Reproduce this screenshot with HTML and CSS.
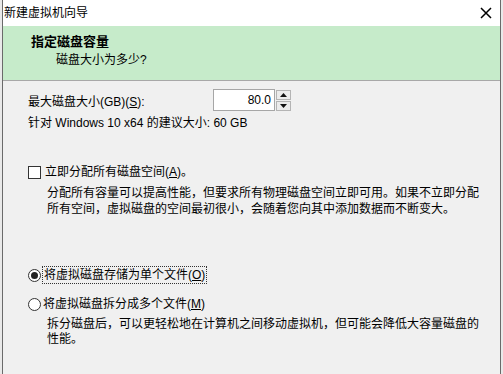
FILE: index.html
```html
<!DOCTYPE html>
<html lang="zh-CN">
<head>
<meta charset="utf-8">
<title>新建虚拟机向导</title>
<link rel="stylesheet" href="styles.css">
</head>
<body>
<div class="window">
  <div class="titlebar">
    <span class="title">新建虚拟机向导</span>
    <span class="close"><svg class="close-icon" width="12" height="12" viewBox="0 0 12 12"><path d="M1 1 L11 11 M11 1 L1 11" stroke="#000" stroke-width="1.5" fill="none"/></svg></span>
  </div>
  <div class="header">
    <div class="h-title">指定磁盘容量</div>
    <div class="h-sub">磁盘大小为多少?</div>
  </div>
  <div class="content">
    <div class="row-size">
      <span class="label">最大磁盘大小(GB)(<u>S</u>):</span>
      <div class="spin">
        <div class="spin-input">80.0</div>
        <div class="spin-btns">
          <div class="spin-btn"><svg width="7" height="4" viewBox="0 0 7 4"><path d="M3.5 0 L7 4 L0 4 Z" fill="#111"/></svg></div>
          <div class="spin-btn"><svg width="7" height="4" viewBox="0 0 7 4"><path d="M0 0 L7 0 L3.5 4 Z" fill="#111"/></svg></div>
        </div>
      </div>
    </div>
    <div class="hint">针对 Windows 10 x64 的建议大小: 60 GB</div>

    <div class="option check-opt">
      <span class="checkbox"></span>
      <span class="opt-label">立即分配所有磁盘空间(<u>A</u>)。</span>
    </div>
    <p class="desc desc-a">分配所有容量可以提高性能，但要求所有物理磁盘空间立即可用。如果不立即分配所有空间，虚拟磁盘的空间最初很小，会随着您向其中添加数据而不断变大。</p>

    <div class="option radio-opt1">
      <span class="radio checked"></span>
      <span class="opt-label focus">将虚拟磁盘存储为单个文件(<u>O</u>)</span>
    </div>
    <div class="option radio-opt2">
      <span class="radio"></span>
      <span class="opt-label">将虚拟磁盘拆分成多个文件(<u>M</u>)</span>
    </div>
    <p class="desc desc-b">拆分磁盘后，可以更轻松地在计算机之间移动虚拟机，但可能会降低大容量磁盘的性能。</p>
  </div>
</div>
</body>
</html>
```
FILE: styles.css
```css
html {
  margin: 0;
  padding: 0;
  overflow: hidden;
}
body {
  margin: 0;
  padding: 0;
  width: 503px;
  height: 374px;
  overflow: hidden;
  background: #e9e9e9;
  font-family: "Liberation Sans", "Noto Sans CJK SC", sans-serif;
  font-size: 12px;
  color: #000;
}
.window {
  margin-left: 2px;
  width: 497px;
  height: 374px;
  border-left: 1px solid #6a6a6a;
  border-right: 1px solid #6a6a6a;
  background: #f0f0f0;
  display: flex;
  flex-direction: column;
}
.titlebar {
  height: 26px;
  background: #fff;
  display: grid;
  grid-template-columns: 1fr 12px;
  align-items: center;
  padding: 0 8px 0 1px;
}
.title {
  font-size: 12px;
  line-height: 16px;
}
.close {
  width: 12px;
  height: 12px;
  display: block;
}
.close-icon {
  display: block;
}
.header {
  background: #c6ebca;
  border-bottom: 1px solid #a8a8a8;
  padding-left: 28px;
  box-sizing: border-box;
  height: 55px;
}
.h-title {
  font-weight: bold;
  font-size: 13px;
  line-height: 16px;
  margin-top: 8px;
}
.h-sub {
  font-size: 12px;
  line-height: 16px;
  margin-top: 2px;
  padding-left: 25px;
}
.content {
  padding-left: 25px;
}
.row-size {
  display: flex;
  align-items: center;
  margin-top: 8px;
  height: 22px;
}
.label {
  width: 185px;
}
.spin {
  display: flex;
  height: 22px;
}
.spin-input {
  width: 57px;
  height: 20px;
  border: 1px solid #a6a6a6;
  background: #fff;
  text-align: right;
  line-height: 20px;
  padding-right: 3px;
  font-size: 12px;
}
.spin-btns {
  display: flex;
  flex-direction: column;
  margin-left: 1px;
  width: 15px;
  gap: 1px;
  padding-top: 1px;
}
.spin-btn {
  flex: 1;
  border: 1px solid #b4b4b4;
  background: #ececec;
  display: flex;
  align-items: center;
  justify-content: center;
}
.spin-btn svg {
  display: block;
}
.hint {
  margin-top: 4px;
  line-height: 16px;
}
.option {
  display: flex;
  align-items: center;
  height: 18px;
}
.check-opt {
  margin-top: 32px;
}
.checkbox {
  width: 11px;
  height: 11px;
  border: 1px solid #333;
  background: #fff;
  margin-right: 4px;
  flex: none;
}
.opt-label {
  line-height: 16px;
}
.desc {
  margin: 0;
  padding-left: 19px;
  width: 440px;
  line-height: 16px;
}
.desc-a {
  margin-top: 4px;
}
.radio-opt1 {
  margin-top: 49px;
}
.radio-opt2 {
  margin-top: 11px;
}
.radio {
  width: 11px;
  height: 11px;
  border: 1px solid #333;
  border-radius: 50%;
  background: #fff;
  margin-right: 2px;
  flex: none;
  display: flex;
  align-items: center;
  justify-content: center;
}
.radio.checked::after {
  content: "";
  width: 7px;
  height: 7px;
  border-radius: 50%;
  background: #222;
}
.focus {
  outline: 1px dotted #333;
  outline-offset: 0;
  padding: 0 1px;
}
.desc-b {
  margin-top: 4px;
  line-height: 15px;
}
```
